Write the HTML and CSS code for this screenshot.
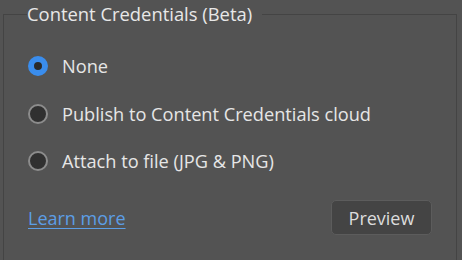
FILE: index.html
```html
<!DOCTYPE html>
<html lang="en">
<head>
    <meta charset="UTF-8">
    <title>Content Credentials</title>
    <link rel="stylesheet" href="styles.css">
</head>
<body>
    <fieldset class="panel">
        <legend class="panel-title">Content Credentials (Beta)</legend>

        <!-- Options -->
        <div class="options">
            <label class="option">
                <span class="radio checked"></span>
                <span>None</span>
            </label>
            <label class="option">
                <span class="radio"></span>
                <span>Publish to Content Credentials cloud</span>
            </label>
            <label class="option">
                <span class="radio"></span>
                <span>Attach to file (JPG &amp; PNG)</span>
            </label>
        </div>

        <div class="footer">
            <a href="#" class="learn">Learn more</a>
            <button class="preview">Preview</button>
        </div>
    </fieldset>
</body>
</html>
```

FILE: styles.css
```css
* {
    box-sizing: border-box;
    margin: 0;
    padding: 0;
}

html, body {
    height: 260px;
    overflow: hidden;
}

body {
    font-family: 'Open Sans', sans-serif;
    background-color: #535353;
    color: #e6e6e6;
}

.panel {
    margin: 4px 5px 0 3px;
    height: 256px;
    border: 1px solid #444444;
    border-bottom: none;
    padding: 0 24px 0 24px;
}

.panel-title {
    font-size: 18.4px;
    padding: 0 10px 0 0;
    margin-left: -1px;
    color: #e8e8e8;
    line-height: 20px;
}

.options {
    display: flex;
    flex-direction: column;
    gap: 23.5px;
    margin-top: 30px;
}

.option {
    display: flex;
    align-items: center;
    gap: 14px;
    font-size: 18.2px;
    height: 24px;
}

.radio {
    width: 20px;
    height: 20px;
    border-radius: 50%;
    border: 2px solid #8c8c8c;
    background: #303030;
    flex-shrink: 0;
}

.radio.checked {
    border: 6px solid #3a8ded;
    background: #2a2a2a;
}

.footer {
    display: flex;
    justify-content: space-between;
    align-items: center;
    margin-top: 27px;
}

.learn {
    color: #5c9ee6;
    font-size: 18px;
    text-decoration: underline;
    text-underline-offset: 3px;
}

.preview {
    font-family: 'Open Sans', sans-serif;
    font-size: 18px;
    color: #dcdcdc;
    background: #444444;
    border: 1px solid #5c5c5c;
    border-radius: 5px;
    width: 101px;
    height: 35px;
}
```
